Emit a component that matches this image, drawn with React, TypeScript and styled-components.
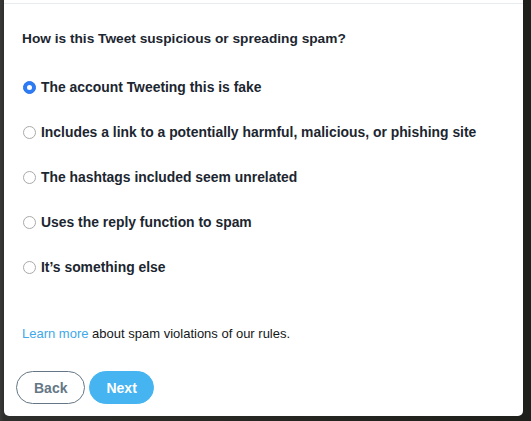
import React, { useState } from "react";
import styled, { createGlobalStyle } from "styled-components";

const Global = createGlobalStyle`
  html, body { margin: 0; padding: 0; }
  body {
    width: 531px;
    height: 421px;
    overflow: hidden;
    background: linear-gradient(90deg, #3a3a38 0px, #2e2e2c 4px, #242420 60%, #1f201c 100%);
    font-family: "Liberation Sans", Arial, Helvetica, sans-serif;
  }
`;

const Page = styled.div`
  display: flex;
  padding-left: 4px;
  width: 531px;
  height: 421px;
  box-sizing: border-box;
`;

const Modal = styled.div`
  width: 519px;
  height: 416px;
  background: #ffffff;
  border-radius: 0 0 5px 5px;
  display: flex;
  flex-direction: column;
  box-sizing: border-box;
`;

const HeaderRule = styled.div`
  height: 3px;
  border-bottom: 1px solid #e6ecf0;
  flex: none;
`;

const Body = styled.div`
  display: flex;
  flex-direction: column;
  padding: 25px 18px 0 18px;
`;

const Question = styled.div`
  font-size: 13.7px;
  line-height: 20px;
  font-weight: 700;
  color: #1c2630;
  margin-bottom: 28px;
`;

const Options = styled.div`
  display: flex;
  flex-direction: column;
  gap: 25px;
`;

const OptionRow = styled.label`
  display: flex;
  align-items: center;
  height: 20px;
  font-size: 13.9px;
  font-weight: 700;
  color: #1c2630;
  cursor: pointer;
`;

const Radio = styled.span<{ $checked: boolean }>`
  width: 13px;
  height: 13px;
  border-radius: 50%;
  box-sizing: border-box;
  margin: 0 5px 0 1px;
  flex: none;
  display: flex;
  align-items: center;
  justify-content: center;
  background: ${(p) => (p.$checked ? "#2d7cf6" : "#ffffff")};
  border: 1px solid ${(p) => (p.$checked ? "#2a74e8" : "#a9a9a9")};
  &::after {
    content: "";
    display: ${(p) => (p.$checked ? "block" : "none")};
    width: 5px;
    height: 5px;
    border-radius: 50%;
    background: #ffffff;
  }
`;

const Footnote = styled.div`
  margin-top: 47px;
  font-size: 13px;
  line-height: 20px;
  color: #14171a;
`;

const Link = styled.a`
  color: #3ea8ea;
  text-decoration: none;
`;

const Buttons = styled.div`
  display: flex;
  gap: 4px;
  margin-top: 27px;
  margin-left: -6px;
`;

const Button = styled.button<{ $primary?: boolean }>`
  height: 33px;
  border-radius: 17px;
  font-family: inherit;
  font-size: 14px;
  font-weight: 700;
  padding: 0 ${(p) => (p.$primary ? "16px" : "17px")};
  box-sizing: border-box;
  cursor: pointer;
  border: 1px solid ${(p) => (p.$primary ? "#45b4f0" : "#657786")};
  background: ${(p) => (p.$primary ? "#45b4f0" : "#ffffff")};
  color: ${(p) => (p.$primary ? "#ffffff" : "#657786")};
`;

const options = [
  "The account Tweeting this is fake",
  "Includes a link to a potentially harmful, malicious, or phishing site",
  "The hashtags included seem unrelated",
  "Uses the reply function to spam",
  "It\u2019s something else",
];

export default function App() {
  const [selected, setSelected] = useState(0);
  return (
    <>
      <Global />
      <Page>
        <Modal>
          <HeaderRule />
          <Body>
            <Question>How is this Tweet suspicious or spreading spam?</Question>
            <Options>
              {options.map((o, i) => (
                <OptionRow key={o} onClick={() => setSelected(i)}>
                  <Radio $checked={selected === i} />
                  {o}
                </OptionRow>
              ))}
            </Options>
            <Footnote>
              <Link href="#">Learn more</Link> about spam violations of our rules.
            </Footnote>
            <Buttons>
              <Button>Back</Button>
              <Button $primary>Next</Button>
            </Buttons>
          </Body>
        </Modal>
      </Page>
    </>
  );
}
